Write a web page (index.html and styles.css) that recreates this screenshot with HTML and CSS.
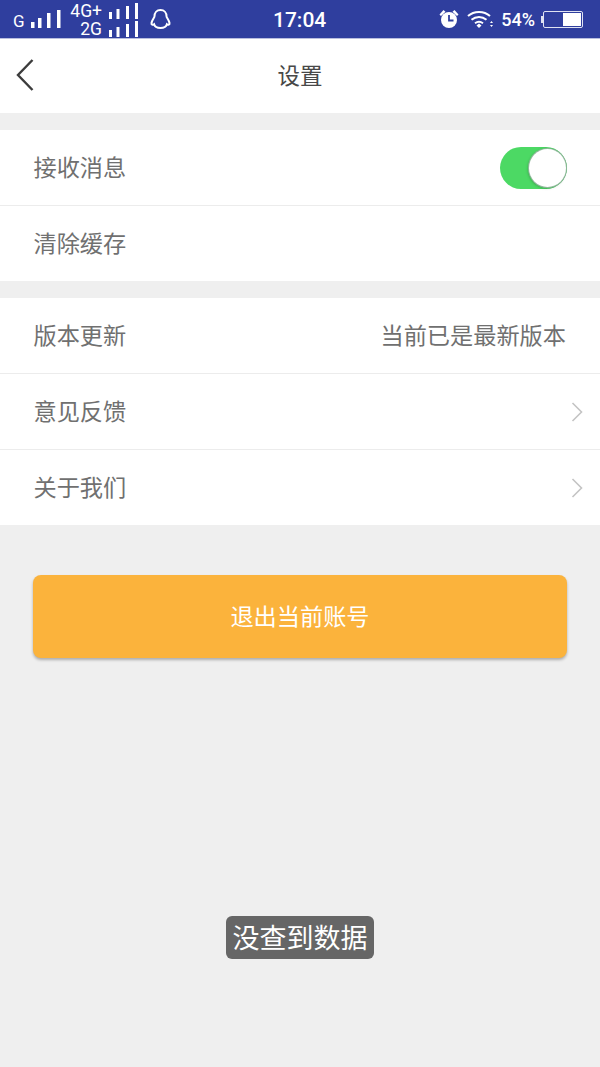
FILE: index.html
```html
<!DOCTYPE html>
<html lang="zh-CN">
<head>
  <meta charset="UTF-8">
  <meta name="viewport" content="width=device-width, initial-scale=1.0">
  <title>设置</title>
  <link rel="stylesheet" href="styles.css">
</head>
<body>
  <div class="status-bar">
    <div class="status-left">
      <span class="net-g">G</span>
      <svg class="bars" width="32" height="18" viewBox="0 0 32 18"><path d="M2 12h3.500v6H2zM9 8h3.500v10H9zM18 3h3.500v15H18zM28 0h3.500v18H28z" fill="#fff"/></svg>
      <div class="net-stack">
        <div class="net-line"><span>4G+</span><svg width="30" height="16" viewBox="0 0 30 16"><path d="M1 9h3v7H1zM8.500 6h3v10h-3zM18 3h3v13h-3zM27 0h3v16h-3z" fill="#fff"/></svg></div>
        <div class="net-line"><span>2G</span><svg width="30" height="16" viewBox="0 0 30 16"><path d="M1 9h3v7H1zM8.500 6h3v10h-3zM18 3h3v13h-3zM27 0h3v16h-3z" fill="#fff"/></svg></div>
      </div>
      <svg class="qq" width="21" height="22" viewBox="0 0 21 22" fill="none" stroke="#fff" stroke-width="2"><path d="M10.500 2c3.800 0 6 2.700 6 6.300 0 1.400 2.600 4 3 6.700.2 1.700-1.200 2.400-2.600 1.300-.5 2-2.300 3.700-6.400 3.700s-5.900-1.700-6.400-3.700C2.700 17.400 1.300 16.700 1.500 15c.4-2.700 3-5.300 3-6.700 0-3.600 2.200-6.300 6-6.300z"/></svg>
    </div>
    <span class="clock">17:04</span>
    <div class="status-right">
      <svg class="alarm" width="20" height="20" viewBox="0 0 20 20"><circle cx="10" cy="11" r="8" fill="#fff"/><path d="M10 6v5.500h4.500" fill="none" stroke="#2f3e9e" stroke-width="1.800"/><path d="M.5 5.500 4.500 1 6.500 2.800 2 7zM19.500 5.500 15.500 1 13.500 2.800 18 7z" fill="#fff"/></svg>
      <svg class="wifi" width="26" height="20" viewBox="0 0 26 20" fill="none" stroke="#fff" stroke-width="2"><path d="M1 7C7 1.500 17 1.500 23 7M4.500 10.800C9 7 15 7 19.500 10.800M8 14.200c2.500-1.800 5.500-1.800 8 0"/><path d="M9.500 16.500 12 14.500l2.500 2-2.500 2.500z" fill="#fff" stroke="none"/><path d="M24.500 12l-1.500 2h3zM24.500 18l-1.500-2h3z" fill="#fff" stroke="none"/></svg>
      <span class="battery-pct">54%</span>
      <div class="battery"><div class="battery-level"></div></div>
    </div>
  </div>

  <header class="nav">
    <svg class="back" width="20" height="34" viewBox="0 0 20 34" fill="none" stroke="#3c3c3c" stroke-width="2.400"><path d="M17.500 2 3 17l14.500 15"/></svg>
    <h1>设置</h1>
  </header>

  <section class="group">
    <div class="row">
      <span>接收消息</span>
      <div class="switch"><div class="knob"></div></div>
    </div>
    <div class="row"><span>清除缓存</span></div>
  </section>

  <section class="group">
    <div class="row">
      <span>版本更新</span>
      <span>当前已是最新版本</span>
    </div>
    <div class="row">
      <span>意见反馈</span>
      <svg class="arrow" width="12" height="20" viewBox="0 0 12 20" fill="none" stroke="#c4c4c4" stroke-width="1.600"><path d="M1.500 1 10.500 10l-9 9"/></svg>
    </div>
    <div class="row">
      <span>关于我们</span>
      <svg class="arrow" width="12" height="20" viewBox="0 0 12 20" fill="none" stroke="#c4c4c4" stroke-width="1.600"><path d="M1.500 1 10.500 10l-9 9"/></svg>
    </div>
  </section>

  <button class="logout">退出当前账号</button>

  <div class="toast">没查到数据</div>
</body>
</html>
```

FILE: styles.css
```css
body {
  font-family: "Noto Sans CJK SC", "Liberation Sans", sans-serif;
  margin: 0;
  padding: 0;
  height: 1067px;
  overflow: hidden;
  position: relative;
  background-color: #efefef;
  color: #707070;
}

.status-bar {
  height: 39px;
  background-color: #2f3e9e;
  border-bottom: 1px solid #b9bedf;
  box-sizing: border-box;
  display: flex;
  align-items: center;
  justify-content: space-between;
  padding: 0 17px 0 13px;
  color: #fff;
  font-family: Roboto, "Liberation Sans", sans-serif;
  position: relative;
}

.status-left,
.status-right {
  display: flex;
  align-items: center;
}

.net-g {
  width: 13px;
  font-size: 17px;
  margin-right: 3px;
  margin-top: 3px;
}

.bars {
  margin-right: 9px;
}

.net-stack {
  width: 68px;
  margin-right: 12px;
}

.net-line {
  display: flex;
  justify-content: flex-end;
  align-items: flex-end;
  height: 18px;
  font-size: 17.500px;
  line-height: 18px;
}

.net-line span {
  position: relative;
  top: 1px;
}

.net-line svg {
  margin-left: 6px;
}

.clock {
  position: absolute;
  left: 273px;
  top: 8px;
  font-size: 21px;
  font-weight: 500;
  line-height: 24px;
}

.alarm {
  margin-right: 8px;
}

.wifi {
  margin-right: 8px;
}

.battery-pct {
  font-size: 18px;
  font-weight: 500;
  margin-right: 8px;
}

.battery {
  width: 40px;
  height: 17px;
  box-sizing: border-box;
  border: 1px solid #dfe2f2;
  border-radius: 2px;
  padding: 1px;
  display: flex;
  justify-content: flex-end;
  position: relative;
}

/* terminal nub on the left end */
.battery::before {
  content: "";
  position: absolute;
  left: -3px;
  top: 4px;
  width: 2px;
  height: 7px;
  background-color: #dfe2f2;
}

.battery-level {
  width: 18px;
  background-color: #fff;
}

.nav {
  height: 74px;
  background: #fff;
  display: flex;
  align-items: center;
  justify-content: center;
  position: relative;
}

.nav h1 {
  font-size: 22.500px;
  font-weight: 400;
  color: #484848;
  margin: 0 0 4px;
}

.back {
  position: absolute;
  left: 15px;
  top: 19px;
}

.group {
  background: #fff;
  margin-top: 17px;
}

.row {
  height: 76px;
  box-sizing: border-box;
  border-bottom: 1px solid #ececec;
  padding: 0 34px 0 33.500px;
  display: flex;
  align-items: center;
  justify-content: space-between;
  font-size: 23.200px;
}

.row:last-child {
  border-bottom: none;
  height: 75px;
}

.row span {
  margin-bottom: 4px;
}

.switch {
  width: 67px;
  height: 42px;
  margin-right: -1px;
  background: linear-gradient(90deg, #4cd964 55%, #3fbd58 100%);
  border-radius: 21px;
  position: relative;
}

.knob {
  position: absolute;
  right: 1px;
  top: 2px;
  width: 37px;
  height: 38px;
  background: #fff;
  border-radius: 50%;
  box-shadow: 0 0 0 1px #8fb89a, -1px 1px 3px rgba(0, 0, 0, 0.25);
}

.arrow {
  margin-right: -17px;
}

.logout {
  display: block;
  width: 534px;
  height: 83px;
  margin: 50px 0 0 33px;
  padding: 0 0 4px;
  background-color: #fbb33c;
  color: #fff;
  border: none;
  border-radius: 8px;
  box-shadow: 0 2px 3px rgba(0, 0, 0, 0.28);
  font-family: inherit;
  font-size: 23.200px;
}

.toast {
  position: absolute;
  left: 226px;
  top: 916px;
  width: 148px;
  height: 43px;
  background-color: #666;
  border-radius: 6px;
  color: #fff;
  font-size: 27px;
  line-height: 41px;
  text-align: center;
}
```
